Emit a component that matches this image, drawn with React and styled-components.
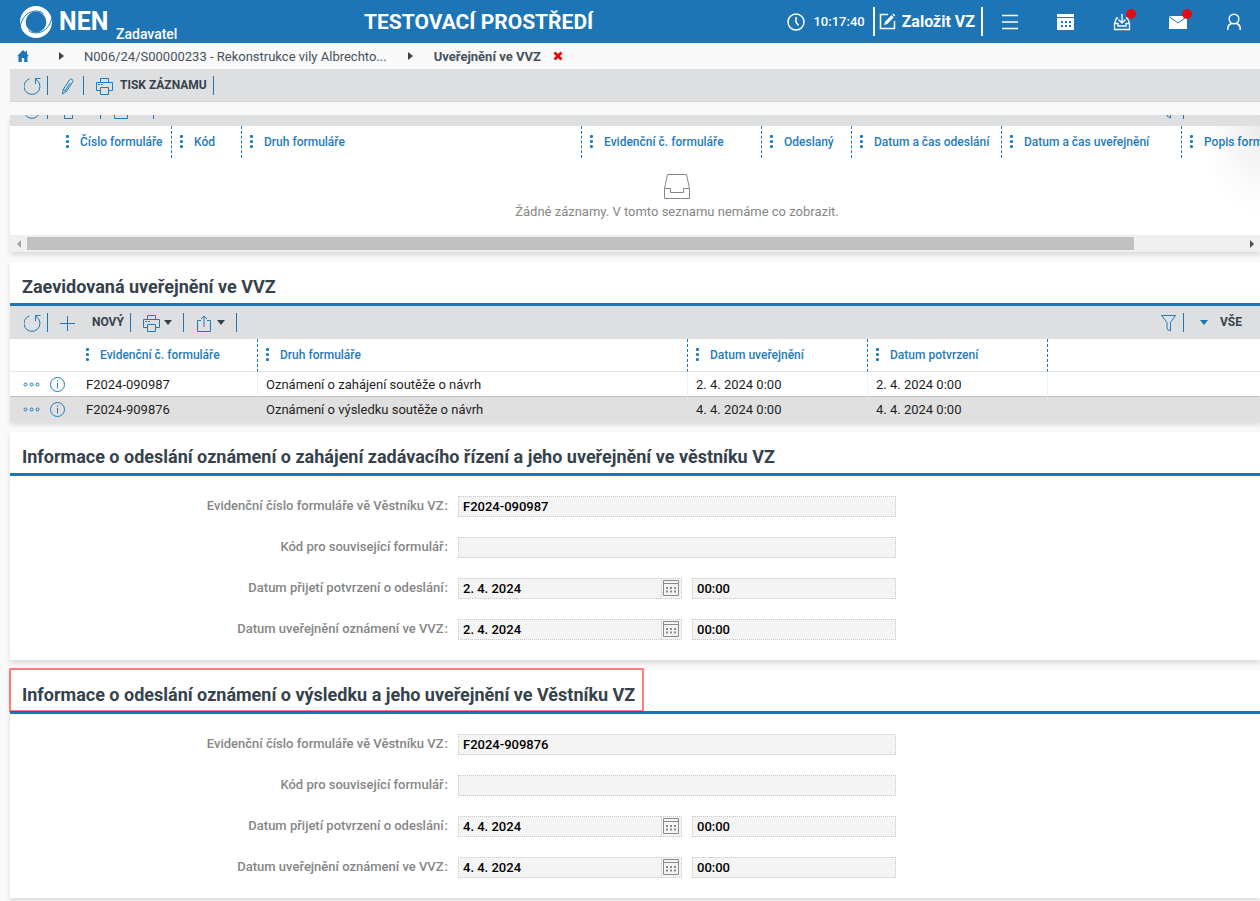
import { useId } from "react";
import styled, { createGlobalStyle } from "styled-components";

const GlobalStyle = createGlobalStyle`
  :root {
    --color-blue: #1d75b5;
    --color-blue-icon: #1f7bba;
    --color-page: #f9f9f9;
    --color-bar: #dddfe1;
    --color-text: #36424b;
    --color-label: #868686;
  }

  * {
    box-sizing: border-box;
    margin: 0;
    padding: 0;
  }

  body {
    background-color: var(--color-page);
    color: var(--color-text);
    font-family: Roboto, "Liberation Sans", sans-serif;
    font-size: 13px;
    overflow-x: hidden;
  }

  button,
  input {
    font: inherit;
    color: inherit;
    background: none;
    border: none;
  }

  button {
    cursor: pointer;
  }

  svg {
    display: block;
    flex: none;
  }
`;

/* ---------- Header ---------- */

const StyledHeader = styled.header`
  display: grid;
  grid-template-columns: minmax(180px, 344px) auto 1fr;
  align-items: center;
  height: 43px;
  padding: 0 17px 0 20px;
  background-color: var(--color-blue);
  color: #fff;
`;

const Brand = styled.a`
  display: flex;
  align-items: center;
  gap: 7px;
  color: inherit;
  text-decoration: none;
`;

const BrandName = styled.span`
  min-width: 50px;
  font-size: 25px;
  font-weight: 700;
  line-height: 43px;
`;

const BrandRole = styled.span`
  align-self: flex-end;
  font-size: 14px;
  font-weight: 500;
  line-height: 18px;
`;

const EnvTitle = styled.h1`
  font-size: 21px;
  font-weight: 700;
  line-height: 42px;
  white-space: nowrap;
`;

const HeaderTools = styled.div`
  display: flex;
  align-items: center;
  justify-content: flex-end;
`;

const Clock = styled.time`
  display: flex;
  align-items: center;
  gap: 8px;
  margin-right: 8px;
  font-weight: 500;
`;

const CreateButton = styled.button`
  display: flex;
  align-items: center;
  gap: 6px;
  height: 29px;
  padding: 0 6px 0 4px;
  border-left: 2px solid #fff;
  border-right: 2px solid #fff;
  font-size: 16px;
  font-weight: 700;
  white-space: nowrap;
`;

const HeaderNav = styled.nav`
  display: flex;
  gap: 38px;
  margin-left: 18px;
`;

const NavButton = styled.button`
  position: relative;
  width: 18px;
  height: 18px;
`;

const Badge = styled.span`
  position: absolute;
  top: -4px;
  right: -5px;
  width: 10px;
  height: 10px;
  border-radius: 50%;
  background-color: #dc0f16;
`;

/* ---------- Breadcrumb ---------- */

const StyledBreadcrumb = styled.nav`
  display: flex;
  align-items: center;
  height: 26px;
  padding-left: 17px;
  color: #46515a;
`;

const Crumb = styled.a`
  color: inherit;
  text-decoration: none;
  font-weight: ${(props) => (props.$current ? 700 : 400)};
  white-space: nowrap;
`;

const CrumbArrow = styled.span`
  width: 5px;
  margin: 0 21px;
  border: 4px solid transparent;
  border-left: 5px solid #36424b;
  border-right: none;

  &:first-of-type {
    margin: 0 20px 0 30px;
  }
`;

const CloseButton = styled.button`
  margin-left: 12px;
`;

/* ---------- Toolbar ---------- */

const StyledToolbar = styled.div`
  display: flex;
  flex: none;
  align-items: center;
  width: 100%;
  height: 33px;
  padding: 0 6px 0 2px;
  background-color: var(--color-bar);
`;

const PageToolbar = styled(StyledToolbar)`
  width: auto;
  margin: 0 0 13px 10px;
  border-bottom: 1px solid #d5d6d7;
`;

const ToolButton = styled.button`
  display: flex;
  align-items: center;
  gap: ${(props) => props.$gap || 4}px;
  height: 19px;
  padding: 0 ${(props) => (props.$menu ? 11 : 6)}px 0 12px;
  border-right: 1px solid var(--color-blue);
  color: var(--color-blue-icon);

  & svg {
    margin-top: 2px;
  }
`;

const ToolLabel = styled.span`
  color: var(--color-text);
  font-size: 12px;
  font-weight: 700;
  line-height: 19px;
  white-space: nowrap;
`;

const Caret = styled.span`
  width: 8px;
  border: 4px solid transparent;
  border-top: 5px solid ${(props) => props.$color || "var(--color-text)"};
  border-bottom: none;
`;

const ToolbarEnd = styled.div`
  display: flex;
  align-items: center;
  margin-left: auto;
`;

const ViewButton = styled.button`
  display: flex;
  align-items: center;
  gap: 12px;
  min-width: 70px;
  padding: 0 12px 0 16px;
`;

/* The list is scrolled, only the lower edge of its toolbar is in view */
const ToolbarClip = styled.div`
  display: flex;
  align-items: flex-end;
  height: 11px;
  overflow: hidden;
`;

/* ---------- Cards ---------- */

const Main = styled.main`
  display: flex;
  flex-direction: column;
  gap: 10px;
  margin: 0 0 3px 10px;
`;

const Card = styled.section`
  background-color: #fff;
  box-shadow: 0 3px 5px rgba(0, 0, 0, 0.12);
`;

const CardTitle = styled.h2`
  display: flex;
  padding: 0 12px;
  border-bottom: 3px solid var(--color-blue);
  font-size: 18px;
  font-weight: 700;
`;

const TitleText = styled.span`
  position: relative;
  padding-top: 8px;
  line-height: 33px;
`;

const TitleMark = styled.span`
  position: absolute;
  top: -2px;
  right: -9px;
  bottom: -1px;
  left: -13px;
  border: 2px solid rgba(255, 0, 0, 0.5);
  border-radius: 1px;
  pointer-events: none;
`;

/* ---------- Tables ---------- */

const ScrollArea = styled.div`
  overflow: hidden;
  background: radial-gradient(
      farthest-side at 100% 0,
      rgba(0, 0, 0, 0.08),
      rgba(0, 0, 0, 0.02) 65%,
      transparent
    )
    no-repeat right top / 60px 90px;
`;

const ScrollContent = styled.div`
  min-width: 1334px;
`;

const Table = styled.table`
  width: 100%;
  table-layout: fixed;
  border-collapse: separate;
  border-spacing: 0;
`;

const Col = styled.col`
  width: ${(props) => (props.$width ? `${props.$width}px` : "auto")};
`;

const HeadCell = styled.th`
  border-right: ${(props) =>
    props.$divider ? "1px dashed var(--color-blue)" : "none"};
  text-align: left;
`;

const HeadButton = styled.button`
  display: flex;
  align-items: center;
  gap: 10px;
  padding-left: 8px;
  color: var(--color-blue-icon);
  font-size: 12px;
  font-weight: 500;
  white-space: nowrap;
`;

const HeadRow = styled.tr`
  ${HeadCell} {
    border-bottom: ${(props) => (props.$line ? "1px solid #dde8ec" : "none")};
    height: ${(props) => (props.$line ? 33 : 32)}px;
  }
`;

const Cell = styled.td`
  height: 25px;
  padding: 0 8px;
  border-right: 1px dotted #e2e6e8;
  border-bottom: 1px solid #dde8ec;
  color: #1e1e1e;
  white-space: nowrap;

  &:first-child,
  &:last-child {
    border-right-color: transparent;
  }
`;

const Row = styled.tr`
  background-color: ${(props) => (props.$selected ? "#e0e0e0" : "#fff")};

  ${Cell} {
    border-bottom-color: ${(props) => (props.$selected ? "#dde5e8" : "#bfbfbf")};
  }
`;

const RowActions = styled.div`
  display: flex;
  align-items: center;
  gap: 10px;
  padding-left: 5px;
  color: var(--color-blue-icon);
`;

const Empty = styled.div`
  display: flex;
  flex-direction: column;
  align-items: center;
  gap: 4px;
  height: 77px;
  padding-top: 15px;
  color: #868686;
  line-height: 18px;
`;

const Scrollbar = styled.div`
  display: flex;
  height: 17px;
  background-color: #f0f0f0;
`;

const ScrollArrow = styled.button`
  display: flex;
  align-items: center;
  justify-content: center;
  width: 17px;
`;

const ScrollTrack = styled.div`
  flex: 1;
  padding: 2px 0;
`;

const ScrollThumb = styled.div`
  width: 91%;
  height: 13px;
  background-color: #c1c1c1;
`;

/* ---------- Form ---------- */

const FormGrid = styled.div`
  display: grid;
  grid-template-columns: minmax(0, 438px) minmax(0, 438px);
  gap: 20px 10px;
  padding: 20px 0;
`;

const Label = styled.label`
  color: var(--color-label);
  font-weight: 500;
  line-height: 19px;
  text-align: right;

  &::after {
    content: ":";
    margin-left: 1px;
  }
`;

const FieldGroup = styled.div`
  display: flex;
  gap: 10px;
`;

const Input = styled.input`
  flex: 1;
  min-width: 0;
  height: 21px;
  padding: 0 4px;
  border: 1px dotted #c8c8c8;
  background-color: #f4f4f4;
  color: #000;
  font-weight: 500;
`;

const DateField = styled.div`
  display: flex;
  flex: 0 1 224px;

  ${Input} {
    border-right: none;
  }
`;

const DateButton = styled.button`
  display: flex;
  align-items: flex-start;
  width: 21px;
  height: 21px;
  padding-left: 1px;
  border: 1px dotted #c8c8c8;
  background-color: #f4f4f4;
  color: #8a8a8a;
`;

/* ---------- Icons ---------- */

function Icon({ size = 17, width, children, strokeWidth = 1 }) {
  const w = width || size;
  return (
    <svg
      width={w}
      height={size}
      viewBox={`0 0 ${w} ${size}`}
      fill="none"
      stroke="currentColor"
      strokeWidth={strokeWidth}
      aria-hidden="true"
    >
      {children}
    </svg>
  );
}

function LogoIcon() {
  return (
    <svg width="32" height="32" viewBox="0 0 32 32" aria-hidden="true">
      <circle cx="16" cy="16" r="13.200" fill="none" stroke="#fff" strokeWidth="5.600" />
      <path
        d="M0 21C1.500 13 6 6.500 14 5.200C18 4.700 21 5.500 23.500 7.500"
        fill="none"
        stroke="#1d75b5"
        strokeWidth="1"
      />
      <path
        d="M32 11C30.500 19 26 25.500 18 26.800C14 27.300 11 26.500 8.500 24.500"
        fill="none"
        stroke="#1d75b5"
        strokeWidth="1"
      />
    </svg>
  );
}

function RefreshIcon() {
  return (
    <Icon>
      <path d="M5.500 .8A8 8 0 1 0 13 2.200L11.500 1" />
      <path d="M16.500 .5H11.500V6" />
    </Icon>
  );
}

function PencilIcon() {
  return (
    <Icon>
      <path d="M2.500 16L3.200 11.500L9.500 1.800Q10.500 .4 12 1.300Q13.600 2.300 12.700 3.800L6.500 13.500L2.500 16" />
      <path d="M10.200 5L5 13M3.200 11.500L6.500 13.500" />
    </Icon>
  );
}

function PrinterIcon() {
  return (
    <Icon>
      <path d="M4.500 4.500V.5H12.500V4.500M4.500 12.500H.5V4.500H16.500V12.500H12.500" />
      <path d="M4.500 9.500H12.500V16.500H4.500Z" />
      <path d="M2 6.500H4M5 6.500H7" />
    </Icon>
  );
}

function PlusIcon() {
  return (
    <Icon>
      <path d="M7.500 1V16M0 8.500H15" />
    </Icon>
  );
}

function ExportIcon() {
  return (
    <Icon>
      <path d="M5 5.500H1.500V16.500H14.500V5.500H11M8 12V1M5 4L8 1L11 4" />
    </Icon>
  );
}

function FilterIcon() {
  return (
    <Icon>
      <path d="M1.500 .5H15.500L10.500 7.500V16L7 14V7.500Z" />
    </Icon>
  );
}

function ClockIcon() {
  return (
    <Icon size={18} strokeWidth={1.5}>
      <circle cx="9" cy="9" r="8" />
      <path d="M9 4V9L11.500 12.500" />
    </Icon>
  );
}

function EditIcon() {
  return (
    <Icon size={17} strokeWidth={1.5}>
      <path d="M9 1.500H1.500V15.500H15.500V8" />
      <path d="M5 12L6 8.800L12.500 2.200L14.700 4.400L8.200 11Z" fill="currentColor" stroke="none" />
      <path d="M13.200 1.500L14.300 .5L16.300 2.500L15.400 3.600Z" fill="currentColor" stroke="none" />
    </Icon>
  );
}

function MenuIcon() {
  return (
    <Icon size={18} strokeWidth={1.5}>
      <path d="M1 2.500H17M1 9H17M1 15.500H17" />
    </Icon>
  );
}

function CalendarSolidIcon() {
  return (
    <Icon size={18}>
      <path d="M0 1H17V4H0ZM0 5H17V17H0Z" fill="currentColor" stroke="none" />
      <path d="M4 9H14M4 13H14" stroke="#1d75b5" strokeWidth="2" strokeDasharray="2 2" />
    </Icon>
  );
}

function InboxIcon() {
  return (
    <Icon size={18} strokeWidth={1.3}>
      <path d="M5 5H3.500L1.500 10.500V16.500H16.500V10.500L14.500 5H13" />
      <path d="M1.500 10.500H5V13H13V10.500H16.500M9 1V9.500M5.500 6.500L9 10L12.500 6.500" />
    </Icon>
  );
}

function MailIcon() {
  return (
    <Icon size={18}>
      <path d="M0 3H18V16H0Z" fill="currentColor" stroke="none" />
      <path d="M0 3.500L9 10L18 3.500" stroke="#1d75b5" />
    </Icon>
  );
}

function UserIcon() {
  return (
    <Icon size={18} strokeWidth={1.5}>
      <circle cx="9" cy="6" r="4.800" />
      <path d="M2.800 17V15Q3.200 11.500 6.500 10.500M15.200 17V15Q14.800 11.500 11.500 10.500" />
    </Icon>
  );
}

function HomeIcon() {
  return (
    <svg width="12" height="12" viewBox="0 0 12 12" fill="#1d75b5" aria-hidden="true">
      <path d="M6 0L8.500 2.500V1H10V4L12 6.300H10.500V12H7.200V8H4.800V12H1.500V6.300H0Z" />
    </svg>
  );
}

function CloseIcon() {
  return (
    <svg width="10" height="10" viewBox="0 0 10 10" aria-hidden="true">
      <path d="M1.500 1.500L8.500 8.500M8.500 1.500L1.500 8.500" stroke="#f40000" strokeWidth="2.600" />
    </svg>
  );
}

function DotsIcon() {
  return (
    <svg width="4" height="14" viewBox="0 0 4 14" fill="currentColor" aria-hidden="true">
      <circle cx="1.500" cy="1.500" r="1.600" />
      <circle cx="1.500" cy="6.500" r="1.600" />
      <circle cx="1.500" cy="11.500" r="1.600" />
    </svg>
  );
}

function MoreIcon() {
  return (
    <Icon size={5} width={17}>
      <circle cx="2.500" cy="2.500" r="1.500" />
      <circle cx="8.500" cy="2.500" r="1.500" />
      <circle cx="14.500" cy="2.500" r="1.500" />
    </Icon>
  );
}

function InfoIcon() {
  return (
    <Icon size={15}>
      <circle cx="7.500" cy="7.500" r="7" />
      <path d="M7.500 6V11.500M7.500 3.500V4.800" />
    </Icon>
  );
}

function TrayIcon() {
  return (
    <Icon size={26}>
      <path d="M3.500 1.500H22.500L25.500 15.500V25.500H.5V15.500Z" />
      <path d="M.5 15.500H6.500V19.500H19.500V15.500H25.500" />
    </Icon>
  );
}

function CalendarIcon() {
  return (
    <Icon size={17} width={16}>
      <path d="M.5 1.500H15.500V16.500H.5ZM.5 4.500H15.500" />
      <path d="M3 9H13M3 12.500H13" strokeWidth="2" strokeDasharray="2 2" />
    </Icon>
  );
}

/* ---------- Components ---------- */

function Header() {
  return (
    <StyledHeader>
      <Brand href="#">
        <LogoIcon />
        <BrandName>NEN</BrandName>
        <BrandRole>Zadavatel</BrandRole>
      </Brand>
      <EnvTitle>TESTOVACÍ PROSTŘEDÍ</EnvTitle>
      <HeaderTools>
        <Clock>
          <ClockIcon />
          10:17:40
        </Clock>
        <CreateButton>
          <EditIcon />
          Založit VZ
        </CreateButton>
        <HeaderNav>
          <NavButton aria-label="Menu">
            <MenuIcon />
          </NavButton>
          <NavButton aria-label="Kalendář">
            <CalendarSolidIcon />
          </NavButton>
          <NavButton aria-label="Doručené">
            <InboxIcon />
            <Badge />
          </NavButton>
          <NavButton aria-label="Zprávy">
            <MailIcon />
            <Badge />
          </NavButton>
          <NavButton aria-label="Uživatel">
            <UserIcon />
          </NavButton>
        </HeaderNav>
      </HeaderTools>
    </StyledHeader>
  );
}

function Breadcrumb() {
  return (
    <StyledBreadcrumb>
      <Crumb href="#" aria-label="Domů">
        <HomeIcon />
      </Crumb>
      <CrumbArrow />
      <Crumb href="#">N006/24/S00000233 - Rekonstrukce vily Albrechto...</Crumb>
      <CrumbArrow />
      <Crumb href="#" $current>
        Uveřejnění ve VVZ
      </Crumb>
      <CloseButton aria-label="Zavřít">
        <CloseIcon />
      </CloseButton>
    </StyledBreadcrumb>
  );
}

function ListToolbar({ canCreate, view }) {
  return (
    <StyledToolbar>
      <ToolButton aria-label="Obnovit">
        <RefreshIcon />
      </ToolButton>
      {canCreate && (
        <ToolButton $gap={15}>
          <PlusIcon />
          <ToolLabel>NOVÝ</ToolLabel>
        </ToolButton>
      )}
      <ToolButton $menu aria-label="Tisk">
        <PrinterIcon />
        <Caret />
      </ToolButton>
      <ToolButton $menu aria-label="Export">
        <ExportIcon />
        <Caret />
      </ToolButton>
      <ToolbarEnd>
        <ToolButton aria-label="Filtr">
          <FilterIcon />
        </ToolButton>
        <ViewButton aria-label="Pohled">
          <Caret $color="var(--color-blue)" />
          {view && <ToolLabel>{view}</ToolLabel>}
        </ViewButton>
      </ToolbarEnd>
    </StyledToolbar>
  );
}

function TableHead({ columns, line }) {
  return (
    <thead>
      <HeadRow $line={line}>
        {columns.map(({ label, divider }, i) => (
          <HeadCell key={i} $divider={divider}>
            {label && (
              <HeadButton>
                <DotsIcon />
                {label}
              </HeadButton>
            )}
          </HeadCell>
        ))}
      </HeadRow>
    </thead>
  );
}

function ColGroup({ columns }) {
  return (
    <colgroup>
      {columns.map(({ width }, i) => (
        <Col key={i} $width={width} />
      ))}
    </colgroup>
  );
}

function CardHeader({ children, marked }) {
  return (
    <CardTitle>
      <TitleText>
        {children}
        {marked && <TitleMark />}
      </TitleText>
    </CardTitle>
  );
}

const sentColumns = [
  { width: 48 },
  { width: 114, label: "Číslo formuláře", divider: true },
  { width: 70, label: "Kód", divider: true },
  { width: 340, label: "Druh formuláře", divider: true },
  { width: 180, label: "Evidenční č. formuláře", divider: true },
  { width: 90, label: "Odeslaný", divider: true },
  { width: 150, label: "Datum a čas odeslání", divider: true },
  { width: 180, label: "Datum a čas uveřejnění", divider: true },
  { label: "Popis formuláře" },
];

function SentForms() {
  return (
    <Card>
      <ToolbarClip>
        <ListToolbar />
      </ToolbarClip>
      <ScrollArea>
        <ScrollContent>
          <Table>
            <ColGroup columns={sentColumns} />
            <TableHead columns={sentColumns} />
          </Table>
          <Empty>
            <TrayIcon />
            <p>Žádné záznamy. V tomto seznamu nemáme co zobrazit.</p>
          </Empty>
        </ScrollContent>
      </ScrollArea>
      <Scrollbar>
        <ScrollArrow aria-label="Posunout vlevo">
          <svg width="4" height="8" viewBox="0 0 4 8" fill="#a3a3a3">
            <path d="M4 0V8L0 4Z" />
          </svg>
        </ScrollArrow>
        <ScrollTrack>
          <ScrollThumb />
        </ScrollTrack>
        <ScrollArrow aria-label="Posunout vpravo">
          <svg width="4" height="8" viewBox="0 0 4 8" fill="#505050">
            <path d="M0 0V8L4 4Z" />
          </svg>
        </ScrollArrow>
      </Scrollbar>
    </Card>
  );
}

const publishedColumns = [
  { width: 68 },
  { width: 180, label: "Evidenční č. formuláře", divider: true },
  { width: 430, label: "Druh formuláře", divider: true },
  { width: 180, label: "Datum uveřejnění", divider: true },
  { width: 180, label: "Datum potvrzení", divider: true },
  {},
];

const publishedRows = [
  {
    number: "F2024-090987",
    type: "Oznámení o zahájení soutěže o návrh",
    published: "2. 4. 2024 0:00",
    confirmed: "2. 4. 2024 0:00",
  },
  {
    number: "F2024-909876",
    type: "Oznámení o výsledku soutěže o návrh",
    published: "4. 4. 2024 0:00",
    confirmed: "4. 4. 2024 0:00",
    selected: true,
  },
];

function PublishedForms() {
  return (
    <Card>
      <CardHeader>Zaevidovaná uveřejnění ve VVZ</CardHeader>
      <ListToolbar canCreate view="VŠE" />
      <Table>
        <ColGroup columns={publishedColumns} />
        <TableHead columns={publishedColumns} line />
        <tbody>
          {publishedRows.map((row) => (
            <Row key={row.number} $selected={row.selected}>
              <Cell>
                <RowActions>
                  <button aria-label="Akce">
                    <MoreIcon />
                  </button>
                  <button aria-label="Detail">
                    <InfoIcon />
                  </button>
                </RowActions>
              </Cell>
              <Cell>{row.number}</Cell>
              <Cell>{row.type}</Cell>
              <Cell>{row.published}</Cell>
              <Cell>{row.confirmed}</Cell>
              <Cell />
            </Row>
          ))}
        </tbody>
      </Table>
    </Card>
  );
}

function TextRow({ label, value }) {
  const id = useId();
  return (
    <>
      <Label htmlFor={id}>{label}</Label>
      <FieldGroup>
        <Input id={id} value={value} readOnly />
      </FieldGroup>
    </>
  );
}

function DateRow({ label, date, time }) {
  const id = useId();
  return (
    <>
      <Label htmlFor={id}>{label}</Label>
      <FieldGroup>
        <DateField>
          <Input id={id} value={date} readOnly />
          <DateButton aria-label="Vybrat datum">
            <CalendarIcon />
          </DateButton>
        </DateField>
        <Input value={time} aria-label={`${label} - čas`} readOnly />
      </FieldGroup>
    </>
  );
}

function NoticeCard({ title, number, date, marked }) {
  return (
    <Card>
      <CardHeader marked={marked}>{title}</CardHeader>
      <FormGrid>
        <TextRow label="Evidenční číslo formuláře vě Věstníku VZ" value={number} />
        <TextRow label="Kód pro související formulář" value="" />
        <DateRow label="Datum přijetí potvrzení o odeslání" date={date} time="00:00" />
        <DateRow label="Datum uveřejnění oznámení ve VVZ" date={date} time="00:00" />
      </FormGrid>
    </Card>
  );
}

function App() {
  return (
    <>
      <GlobalStyle />
      <Header />
      <Breadcrumb />
      <PageToolbar>
        <ToolButton aria-label="Obnovit">
          <RefreshIcon />
        </ToolButton>
        <ToolButton aria-label="Upravit">
          <PencilIcon />
        </ToolButton>
        <ToolButton $gap={7}>
          <PrinterIcon />
          <ToolLabel>TISK ZÁZNAMU</ToolLabel>
        </ToolButton>
      </PageToolbar>
      <Main>
        <SentForms />
        <PublishedForms />
        <NoticeCard
          title="Informace o odeslání oznámení o zahájení zadávacího řízení a jeho uveřejnění ve věstníku VZ"
          number="F2024-090987"
          date="2. 4. 2024"
        />
        <NoticeCard
          title="Informace o odeslání oznámení o výsledku a jeho uveřejnění ve Věstníku VZ"
          number="F2024-909876"
          date="4. 4. 2024"
          marked
        />
      </Main>
    </>
  );
}

export default App;
